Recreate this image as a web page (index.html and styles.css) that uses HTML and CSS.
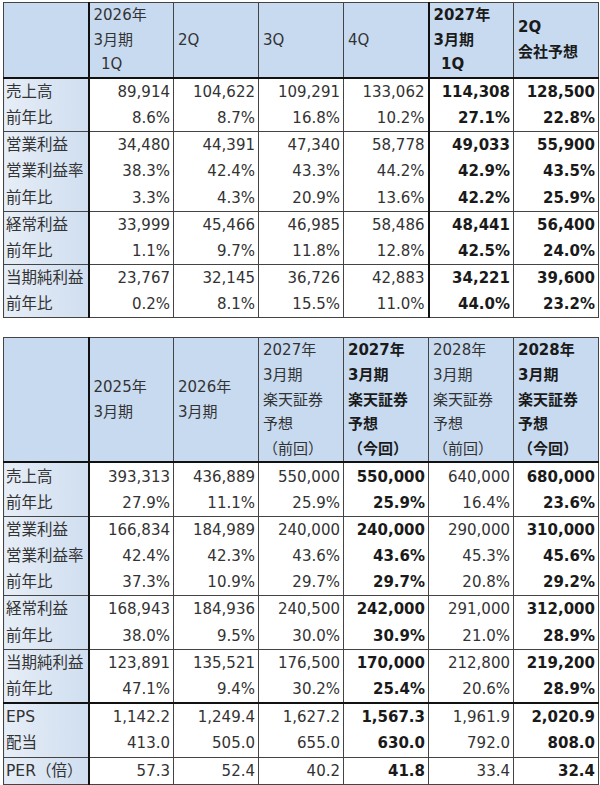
FILE: index.html
```html
<!DOCTYPE html>
<html lang="ja">
<head>
<meta charset="utf-8">
<link rel="stylesheet" href="styles.css">
</head>
<body>
<div class="page">
<table class="fin t1">
<colgroup><col><col><col><col><col><col><col></colgroup>
<thead>
<tr>
<th class="lab"></th>
<th>2026年<br>3月期<br>&ensp;1Q</th>
<th>2Q</th>
<th>3Q</th>
<th class="sep">4Q</th>
<th class="b">2027年<br>3月期<br>&ensp;1Q</th>
<th class="b">2Q<br>会社予想</th>
</tr>
</thead>
<tbody class="grp">
<tr><td class="lab">売上高</td><td>89,914</td><td>104,622</td><td>109,291</td><td class="sep">133,062</td><td class="b">114,308</td><td class="b">128,500</td></tr>
<tr><td class="lab">前年比</td><td>8.6%</td><td>8.7%</td><td>16.8%</td><td class="sep">10.2%</td><td class="b">27.1%</td><td class="b">22.8%</td></tr>
</tbody>
<tbody class="grp">
<tr><td class="lab">営業利益</td><td>34,480</td><td>44,391</td><td>47,340</td><td class="sep">58,778</td><td class="b">49,033</td><td class="b">55,900</td></tr>
<tr><td class="lab">営業利益率</td><td>38.3%</td><td>42.4%</td><td>43.3%</td><td class="sep">44.2%</td><td class="b">42.9%</td><td class="b">43.5%</td></tr>
<tr><td class="lab">前年比</td><td>3.3%</td><td>4.3%</td><td>20.9%</td><td class="sep">13.6%</td><td class="b">42.2%</td><td class="b">25.9%</td></tr>
</tbody>
<tbody class="grp">
<tr><td class="lab">経常利益</td><td>33,999</td><td>45,466</td><td>46,985</td><td class="sep">58,486</td><td class="b">48,441</td><td class="b">56,400</td></tr>
<tr><td class="lab">前年比</td><td>1.1%</td><td>9.7%</td><td>11.8%</td><td class="sep">12.8%</td><td class="b">42.5%</td><td class="b">24.0%</td></tr>
</tbody>
<tbody class="grp">
<tr><td class="lab">当期純利益</td><td>23,767</td><td>32,145</td><td>36,726</td><td class="sep">42,883</td><td class="b">34,221</td><td class="b">39,600</td></tr>
<tr><td class="lab">前年比</td><td>0.2%</td><td>8.1%</td><td>15.5%</td><td class="sep">11.0%</td><td class="b">44.0%</td><td class="b">23.2%</td></tr>
</tbody>
</table>

<table class="fin t2">
<colgroup><col><col><col><col><col><col><col></colgroup>
<thead>
<tr>
<th class="lab"></th>
<th>2025年<br>3月期</th>
<th>2026年<br>3月期</th>
<th>2027年<br>3月期<br>楽天証券<br>予想<br>（前回）</th>
<th class="b">2027年<br>3月期<br>楽天証券<br>予想<br>（今回）</th>
<th>2028年<br>3月期<br>楽天証券<br>予想<br>（前回）</th>
<th class="b">2028年<br>3月期<br>楽天証券<br>予想<br>（今回）</th>
</tr>
</thead>
<tbody class="grp">
<tr><td class="lab">売上高</td><td>393,313</td><td>436,889</td><td>550,000</td><td class="b">550,000</td><td>640,000</td><td class="b">680,000</td></tr>
<tr><td class="lab">前年比</td><td>27.9%</td><td>11.1%</td><td>25.9%</td><td class="b">25.9%</td><td>16.4%</td><td class="b">23.6%</td></tr>
</tbody>
<tbody class="grp">
<tr><td class="lab">営業利益</td><td>166,834</td><td>184,989</td><td>240,000</td><td class="b">240,000</td><td>290,000</td><td class="b">310,000</td></tr>
<tr><td class="lab">営業利益率</td><td>42.4%</td><td>42.3%</td><td>43.6%</td><td class="b">43.6%</td><td>45.3%</td><td class="b">45.6%</td></tr>
<tr><td class="lab">前年比</td><td>37.3%</td><td>10.9%</td><td>29.7%</td><td class="b">29.7%</td><td>20.8%</td><td class="b">29.2%</td></tr>
</tbody>
<tbody class="grp">
<tr><td class="lab">経常利益</td><td>168,943</td><td>184,936</td><td>240,500</td><td class="b">242,000</td><td>291,000</td><td class="b">312,000</td></tr>
<tr><td class="lab">前年比</td><td>38.0%</td><td>9.5%</td><td>30.0%</td><td class="b">30.9%</td><td>21.0%</td><td class="b">28.9%</td></tr>
</tbody>
<tbody class="grp">
<tr><td class="lab">当期純利益</td><td>123,891</td><td>135,521</td><td>176,500</td><td class="b">170,000</td><td>212,800</td><td class="b">219,200</td></tr>
<tr><td class="lab">前年比</td><td>47.1%</td><td>9.4%</td><td>30.2%</td><td class="b">25.4%</td><td>20.6%</td><td class="b">28.9%</td></tr>
</tbody>
<tbody class="grp thick">
<tr><td class="lab">EPS</td><td>1,142.2</td><td>1,249.4</td><td>1,627.2</td><td class="b">1,567.3</td><td>1,961.9</td><td class="b">2,020.9</td></tr>
<tr><td class="lab">配当</td><td>413.0</td><td>505.0</td><td>655.0</td><td class="b">630.0</td><td>792.0</td><td class="b">808.0</td></tr>
</tbody>
<tbody class="grp">
<tr><td class="lab">PER（倍）</td><td>57.3</td><td>52.4</td><td>40.2</td><td class="b">41.8</td><td>33.4</td><td class="b">32.4</td></tr>
</tbody>
</table>
</div>
</body>
</html>
```

FILE: styles.css
```css
html, body {
  margin: 0;
  padding: 0;
  background: #ffffff;
}

.page {
  padding: 2px 3px 0 3px;
  display: flex;
  flex-direction: column;
  gap: 19px;
}

.fin {
  border-collapse: collapse;
  table-layout: fixed;
  width: 594px;
  font-family: "DejaVu Sans", "Noto Sans CJK JP", sans-serif;
  font-size: 15px;
  color: #333333;
  border: 1px solid #444444;
}

.fin col {
  width: 85px;
}

.fin th {
  background: #c8daf0;
  font-weight: normal;
  text-align: left;
  vertical-align: middle;
  line-height: 24.6px;
  padding: 0 0 0 4px;
  border: 1px solid #444444;
  border-bottom: 2px solid #111111;
  white-space: nowrap;
}

.t1 th {
  height: 71px;
}

.t2 th {
  height: 121px;
}

.fin td {
  height: 26.2px;
  padding: 0 3px 0 0;
  text-align: right;
  vertical-align: middle;
  line-height: 20px;
  border-left: 1px solid #444444;
  border-right: 1px solid #444444;
  white-space: nowrap;
}

.fin .grp {
  border-top: 1px solid #444444;
}

.fin thead + .grp {
  border-top: 2px solid #111111;
}

.fin .grp.thick {
  border-top: 2px solid #111111;
}

.fin td.lab {
  text-align: left;
  padding: 0 0 0 2px;
  font-size: 15.5px;
  background: linear-gradient(to right, #e6edf6, #cfdef0);
  border-right: 2px solid #111111;
}

.fin th.lab {
  border-right: 2px solid #111111;
}

.t1 .sep {
  border-right: 2px solid #111111;
}

.fin .b {
  font-weight: bold;
  color: #1a1a1a;
}
```
